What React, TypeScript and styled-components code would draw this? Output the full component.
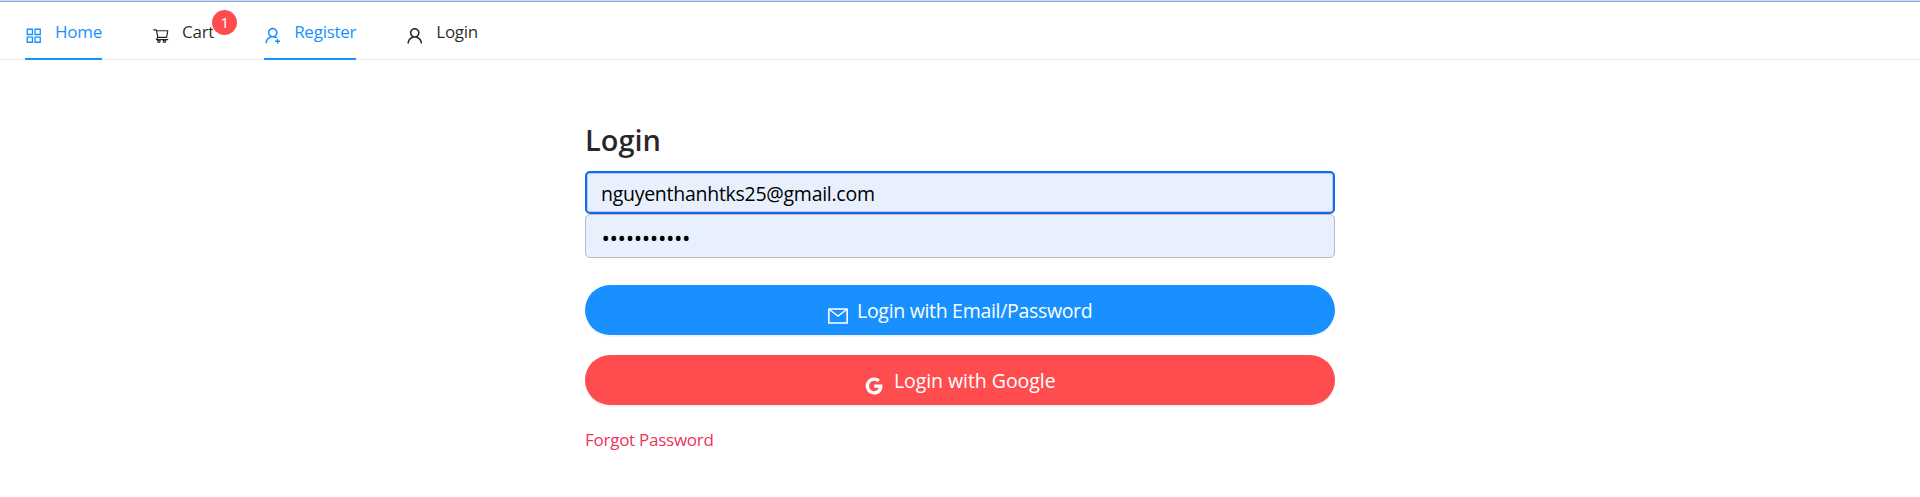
import React from 'react';
import styled, { createGlobalStyle } from 'styled-components';
import {
  AiOutlineAppstore,
  AiOutlineGoogle,
  AiOutlineMail,
  AiOutlineShoppingCart,
  AiOutlineUser,
  AiOutlineUserAdd,
} from 'react-icons/ai';

// Trims the empty margin around the glyphs so they fill their box.
const ICON_BOX = '64 64 896 896';

const GlobalStyle = createGlobalStyle`
  *, *::before, *::after { box-sizing: border-box; }
  body {
    margin: 0;
    background: #fff;
    color: rgba(0, 0, 0, 0.85);
    font-family: 'Open Sans', 'Noto Sans', sans-serif;
    font-size: 17px;
    letter-spacing: -0.26px;
  }
`;

const Page = styled.div`
  min-height: 497px;
  border-top: 1px solid #c9daf5;
`;

const NavBar = styled.nav`
  display: flex;
  height: 59px;
  border-top: 1px solid #93add6;
  border-bottom: 1px solid #eeeeee;
`;

const NavItem = styled.a<{ $active?: boolean }>`
  position: relative;
  display: flex;
  gap: 12.5px;
  height: 58px;
  margin: 0 25px;
  color: ${(p) => (p.$active ? '#1890ff' : 'rgba(0, 0, 0, 0.85)')};
  border-bottom: 2px solid ${(p) => (p.$active ? '#1890ff' : 'transparent')};
  line-height: 60px;
  white-space: nowrap;

  svg {
    width: 17.5px;
    height: 17.5px;
    margin-top: 25px;
  }
`;

const Badge = styled.span`
  position: absolute;
  top: 7.5px;
  right: -23px;
  width: 25px;
  height: 25px;
  border-radius: 50%;
  background: #ff4d4f;
  box-shadow: 0 0 0 1px #fff;
  color: #fff;
  font-size: 15px;
  line-height: 25px;
  text-align: center;
`;

const LoginPanel = styled.main`
  width: 750px;
  margin: 0 auto;
  padding-top: 59px;
`;

const Title = styled.h4`
  margin: 0 0 11px;
  font-size: 29px;
  font-weight: 600;
  line-height: 41px;
  letter-spacing: 0;
`;

const Form = styled.form`
  display: flex;
  flex-direction: column;
`;

const Field = styled.input`
  height: 44px;
  margin: 0;
  padding: 0 15px;
  border: 1px solid #b9bcc2;
  border-radius: 5px;
  background: #e8f0fe;
  color: #000;
  font-family: inherit;
  font-size: 19.5px;
  letter-spacing: -0.27px;
  outline: none;

  &[type='email'] {
    height: 43px;
    padding: 1px 14px 0;
    border: 2px solid #1266f1;
    box-shadow: inset 0 0 0 1px #bccdf0;
  }

  &[type='password'] {
    padding: 2px 15.5px 0;
    font-size: 22.5px;
    letter-spacing: -0.4px;
  }
`;

const Button = styled.button<{ $danger?: boolean }>`
  display: flex;
  align-items: center;
  justify-content: center;
  gap: 9.5px;
  height: 50px;
  margin: ${(p) => (p.$danger ? '20px' : '27px')} 0 0;
  padding: 0;
  border: 0;
  border-radius: 50px;
  background: ${(p) => (p.$danger ? '#ff4d4f' : '#1890ff')};
  box-shadow: 0 2px 0 rgba(0, 0, 0, 0.045);
  color: #fff;
  font-family: inherit;
  font-size: 19.5px;
  letter-spacing: ${(p) => (p.$danger ? '-0.05px' : '-0.31px')};

  svg {
    width: 20px;
    height: 20px;
    margin-top: 12px;
  }
`;

const ForgotLink = styled.a`
  align-self: flex-start;
  margin-top: 22px;
  color: #f0325a;
  line-height: 26px;
`;

export default function App() {
  return (
    <>
      <GlobalStyle />
      <Page>
        <NavBar>
          <NavItem $active><AiOutlineAppstore viewBox={ICON_BOX} />Home</NavItem>
          <NavItem>
            <AiOutlineShoppingCart viewBox="0 0 1024 1024" />Cart
            <Badge>1</Badge>
          </NavItem>
          <NavItem $active><AiOutlineUserAdd viewBox={ICON_BOX} />Register</NavItem>
          <NavItem><AiOutlineUser viewBox={ICON_BOX} />Login</NavItem>
        </NavBar>
        <LoginPanel>
          <Title>Login</Title>
          <Form>
            <Field type="email" defaultValue="nguyenthanhtks25@gmail.com" />
            <Field type="password" defaultValue="password123" />
            <Button type="button">
              <AiOutlineMail viewBox={ICON_BOX} />Login with Email/Password
            </Button>
            <Button type="button" $danger>
              <AiOutlineGoogle viewBox={ICON_BOX} />Login with Google
            </Button>
            <ForgotLink>Forgot Password</ForgotLink>
          </Form>
        </LoginPanel>
      </Page>
    </>
  );
}
